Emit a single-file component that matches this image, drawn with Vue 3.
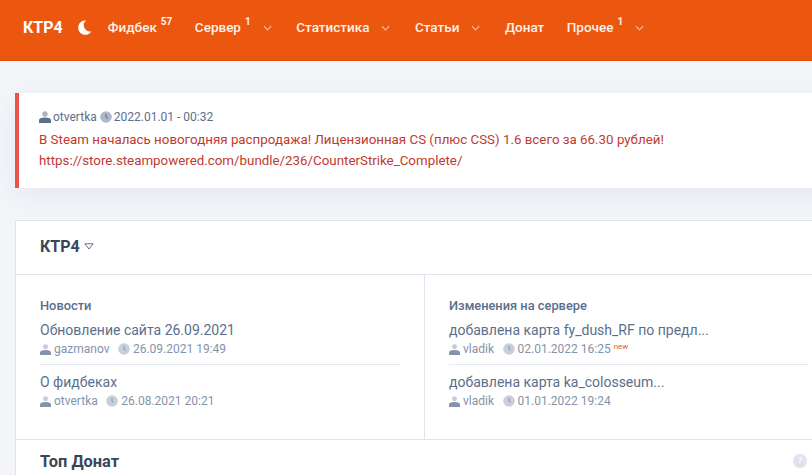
<script setup>
const nav = [
  { label: 'Фидбек', sup: '57' },
  { label: 'Сервер', sup: '1', caret: true },
  { label: 'Статистика', caret: true },
  { label: 'Статьи', caret: true },
  { label: 'Донат' },
  { label: 'Прочее', sup: '1', caret: true }
]
const news = [
  { title: 'Обновление сайта 26.09.2021', user: 'gazmanov', date: '26.09.2021 19:49' },
  { title: 'О фидбеках', user: 'otvertka', date: '26.08.2021 20:21' }
]
const changes = [
  { title: 'добавлена карта fy_dush_RF по предл...', user: 'vladik', date: '02.01.2022 16:25', isNew: true },
  { title: 'добавлена карта ka_colosseum...', user: 'vladik', date: '01.01.2022 19:24' }
]
const columns = [
  { heading: 'Новости', items: news },
  { heading: 'Изменения на сервере', items: changes }
]
</script>

<template>
  <div class="page">
    <header class="topbar">
      <span class="brand">КТР4</span>
      <svg class="moon" viewBox="0 0 16 16" width="15" height="15"><path fill="#fff" d="M9.6.6A7.6 7.6 0 1 0 15.4 12 6.6 6.6 0 0 1 9.6.6z"/></svg>
      <nav class="nav">
        <a v-for="n in nav" :key="n.label" class="nav-item" :class="{ 'has-caret': n.caret }">
          <span>{{ n.label }}</span><sup v-if="n.sup" class="nav-sup">{{ n.sup }}</sup>
          <svg v-if="n.caret" class="caret" viewBox="0 0 10 6" width="9" height="6"><path d="M1 1l4 4 4-4" fill="none" stroke="#f8bb98" stroke-width="1.3"/></svg>
        </a>
      </nav>
    </header>

    <section class="alert">
      <div class="alert-meta">
        <svg class="ico" viewBox="0 0 12 12" width="12" height="12"><circle cx="6" cy="3" r="2.7" fill="#a9b3c6"/><path d="M0 12V9.5C0 7.5 2 6.6 6 6.6s6 .9 6 2.9V12z" fill="#5b6f8c"/></svg>
        <span>otvertka</span>
        <svg class="ico clock" viewBox="0 0 12 12" width="12" height="12"><circle cx="6" cy="6" r="5.8" fill="#aeb7c8"/><path d="M6 3v3.4l2 .8" fill="none" stroke="#5b6f8c" stroke-width="1"/></svg>
        <span>2022.01.01 - 00:32</span>
      </div>
      <p class="alert-text">В Steam началась новогодняя распродажа! Лицензионная CS (плюс CSS) 1.6 всего за 66.30 рублей!</p>
      <p class="alert-text">https://store.steampowered.com/bundle/236/CounterStrike_Complete/</p>
    </section>

    <section class="card">
      <div class="card-head">
        <h2 class="card-title">КТР4</h2>
        <svg viewBox="0 0 10 7" width="10" height="7"><path d="M.8.8h8.4L5 6z" fill="none" stroke="#5b6f8c" stroke-width="1"/></svg>
      </div>
      <div class="cols">
        <div v-for="col in columns" :key="col.heading" class="col">
          <h3 class="col-title">{{ col.heading }}</h3>
          <div v-for="item in col.items" :key="item.title" class="item">
            <div class="item-title">{{ item.title }}</div>
            <div class="item-meta">
              <svg class="ico" viewBox="0 0 12 12" width="11" height="11"><circle cx="6" cy="3" r="2.7" fill="#c5cbd8"/><path d="M0 12V9.5C0 7.5 2 6.6 6 6.6s6 .9 6 2.9V12z" fill="#8493ab"/></svg>
              <span class="user">{{ item.user }}</span>
              <svg class="ico clock2" viewBox="0 0 12 12" width="12" height="12"><circle cx="6" cy="6" r="5.8" fill="#c8cedb"/><path d="M6 3v3.4l1.6.8" fill="none" stroke="#8493ab" stroke-width="1"/></svg>
              <span>{{ item.date }}</span>
              <sup v-if="item.isNew" class="new">new</sup>
            </div>
          </div>
        </div>
      </div>
      <div class="card-foot">
        <h2 class="foot-title">Топ Донат</h2>
        <span class="help">?</span>
      </div>
    </section>
  </div>
</template>

<style>
html, body { margin: 0; overflow: hidden; background: #f3f5f9; }
</style>

<style scoped>
.page {
  width: 812px;
  height: 475px;
  overflow: hidden;
  background: #f3f5f9;
  font-family: Roboto, "Liberation Sans", sans-serif;
  font-size: 13px;
  color: #5b6f8c;
}
.topbar {
  height: 54px;
  background: #ec5710;
  border-bottom: 1px solid #e04f0b;
  display: flex;
  align-items: center;
  padding: 0 0 6px 23px;
  color: #fff;
}
.brand { font-size: 16px; font-weight: 700; color: #fff; }
.moon { margin-left: 14px; }
.nav { display: flex; align-items: center; margin-left: 16px; }
.nav-item {
  display: flex;
  align-items: center;
  font-size: 13.5px;
  font-weight: 500;
  color: #fff0e8;
  margin-right: 22.5px;
  white-space: nowrap;
}
.nav-item.has-caret { margin-right: 24.5px; }
.nav-sup { font-size: 10px; font-weight: 700; margin-bottom: 10px; margin-left: 4px; line-height: 1; vertical-align: baseline; }
.caret { margin-left: 12px; margin-top: 2px; }
.alert {
  margin: 32px -40px 0 15px;
  height: 95px;
  box-sizing: border-box;
  background: #fff;
  border-left: 4px solid #e8534a;
  padding: 15px 0 0 20px;
  box-shadow: 0 8px 24px rgba(60, 70, 100, .07);
}
.alert-meta { display: flex; align-items: center; font-size: 12px; line-height: 18px; height: 18px; color: #5b6f8c; }
.alert-meta .ico { margin-right: 2px; }
.alert-meta .clock { margin: 0 2px 0 3px; }
.alert-text { margin: 0; font-size: 13.33px; line-height: 21px; color: #bf3a30; white-space: nowrap; }
.alert-meta + .alert-text { margin-top: 2.5px; }
.card {
  margin: 32px -60px 0 15px;
  background: #fff;
  border: 1px solid #e1e4ee;
}
.card-head {
  height: 51px;
  display: flex;
  align-items: center;
  gap: 4px;
  padding: 0 0 2px 24px;
  border-bottom: 1px solid #e1e4ee;
}
.card-title { margin: 0; font-size: 16px; font-weight: 700; color: #3a4658; }
.cols { display: grid; grid-template-columns: 409px 1fr; height: 164px; border-bottom: 1px solid #e1e4ee; }
.col { padding: 23px 24px 0; box-sizing: border-box; }
.col:first-child { border-right: 1px solid #e1e4ee; }
.col:last-child { padding-right: 25px; width: 408px; }
.col-title { margin: 0 0 6px; font-size: 12.85px; font-weight: 500; line-height: 16px; color: #5b6f8c; }
.item { padding-bottom: 7px; }
.item + .item { border-top: 1px solid #e6e9f1; padding-top: 7px; }
.item-title { font-size: 14px; line-height: 20px; color: #5b6f8c; white-space: nowrap; }
.item-meta { display: flex; align-items: center; font-size: 12px; line-height: 16px; height: 16px; color: #8493ab; margin-top: 1px; }
.item-meta .ico { margin-right: 3px; }
.item-meta .clock2 { margin-left: 8.5px; margin-right: 3px; }
.new { font-size: 8px; color: #e8534a; line-height: 1; margin: 2px 0 0 3px; align-self: flex-start; }
.card-foot {
  width: 792px;
  height: 60px;
  display: flex;
  justify-content: space-between;
  align-items: flex-start;
  padding: 12px 1px 0 24px;
  box-sizing: border-box;
}
.foot-title { margin: 0; font-size: 16.4px; font-weight: 700; line-height: 19px; color: #3a4658; }
.help {
  margin-top: 2px;
  width: 14px;
  height: 14px;
  border-radius: 50%;
  background: #dfe3ee;
  color: #fff;
  font-size: 9px;
  line-height: 14px;
  text-align: center;
}
</style>
